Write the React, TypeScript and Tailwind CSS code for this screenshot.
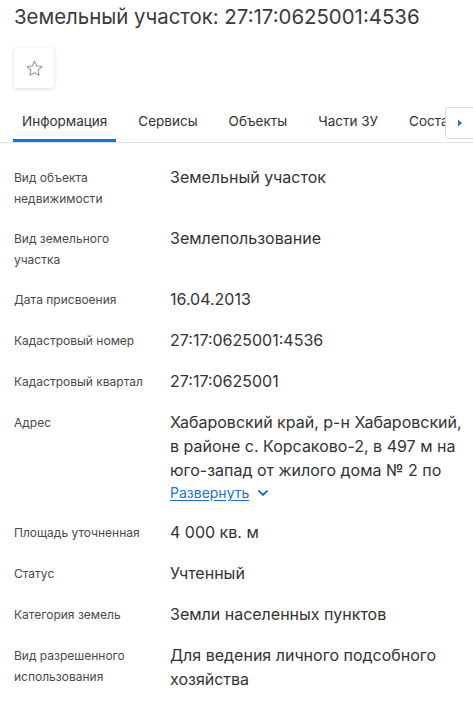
import { useState } from 'react'

const rows: Array<{ label: string[]; value: string[]; expand?: boolean }> = [
  { label: ['Вид объекта', 'недвижимости'], value: ['Земельный участок'] },
  { label: ['Вид земельного', 'участка'], value: ['Землепользование'] },
  { label: ['Дата присвоения'], value: ['16.04.2013'] },
  { label: ['Кадастровый номер'], value: ['27:17:0625001:4536'] },
  { label: ['Кадастровый квартал'], value: ['27:17:0625001'] },
  {
    label: ['Адрес'],
    value: ['Хабаровский край, р-н Хабаровский,', 'в районе с. Корсаково-2, в 497 м на', 'юго-запад от жилого дома № 2 по'],
    expand: true,
  },
  { label: ['Площадь уточненная'], value: ['4 000 кв. м'] },
  { label: ['Статус'], value: ['Учтенный'] },
  { label: ['Категория земель'], value: ['Земли населенных пунктов'] },
  { label: ['Вид разрешенного', 'использования'], value: ['Для ведения личного подсобного', 'хозяйства'] },
]

const tabs = ['Информация', 'Сервисы', 'Объекты', 'Части ЗУ', 'Состав']

export default function App() {
  const [active, setActive] = useState(0)

  return (
    <div className="min-h-screen bg-white font-['Inter',sans-serif] text-[#333]">
      {/* Title */}
      <h1 className="pl-[14px] pt-[3px] text-[20.4px] leading-[28px] font-normal text-[#3b3b3b] whitespace-nowrap">
        Земельный участок: 27:17:0625001:4536
      </h1>

      {/* Favourite */}
      <div className="pl-[14px] mt-[17px]">
        <button className="w-10 h-10 flex items-center justify-center rounded bg-white shadow-[0_1px_4px_rgba(0,0,0,0.15)]">
          <svg width="19" height="19" viewBox="0 0 24 24" fill="none" stroke="#9a9a9a" strokeWidth="1.4" strokeLinejoin="round">
            <path d="M12 2.8l2.85 5.95 6.5.8-4.8 4.5 1.25 6.45L12 17.3l-5.8 3.2 1.25-6.45-4.8-4.5 6.5-.8z" />
          </svg>
        </button>
      </div>

      {/* Tabs */}
      <div className="relative mt-[18px] border-b border-[#e3e3e3] overflow-hidden">
        <div className="flex pl-[13px] gap-[13px] whitespace-nowrap">
          {tabs.map((t, i) => (
            <button
              key={t}
              onClick={() => setActive(i)}
              className={`px-[9px] pt-[5px] pb-[8px] text-[13.5px] leading-[20px] border-b-[3px] ${
                i === active ? 'border-[#1a73d9] text-[#333]' : 'border-transparent text-[#333]'
              }`}
            >
              {t}
            </button>
          ))}
        </div>
        <div className="absolute right-0 top-[1px] w-[28px] h-[32px] bg-white border border-r-0 border-[#d5dbe3] rounded-l-[4px] flex items-center justify-center">
          <svg width="6" height="8" viewBox="0 0 6 8">
            <path d="M1 0.5L5 4L1 7.5Z" fill="#1a73d9" />
          </svg>
        </div>
      </div>

      {/* Info rows */}
      <div className="pt-[22px] pl-[14px] pr-2">
        {rows.map(r => (
          <div key={r.label.join(' ')} className="flex mb-[17px]">
            <div className="w-[156px] shrink-0 pt-[2px] text-[12px] leading-[21px] text-[#4a4a4a]">
              {r.label.map(l => (
                <div key={l}>{l}</div>
              ))}
            </div>
            <div className="text-[16px] leading-[24px] text-[#333]">
              {r.value.map(v => (
                <div key={v} className="whitespace-nowrap">{v}</div>
              ))}
              {r.expand && (
                <button className="mt-[1px] flex items-center gap-[9px] text-[14px] leading-[20px] text-[#1f6fd8]">
                  <span className="underline underline-offset-2">Развернуть</span>
                  <svg width="10" height="6" viewBox="0 0 10 6" fill="none" stroke="#1f6fd8" strokeWidth="1.8" strokeLinecap="round">
                    <path d="M1 1l4 4 4-4" />
                  </svg>
                </button>
              )}
            </div>
          </div>
        ))}
      </div>
    </div>
  )
}
